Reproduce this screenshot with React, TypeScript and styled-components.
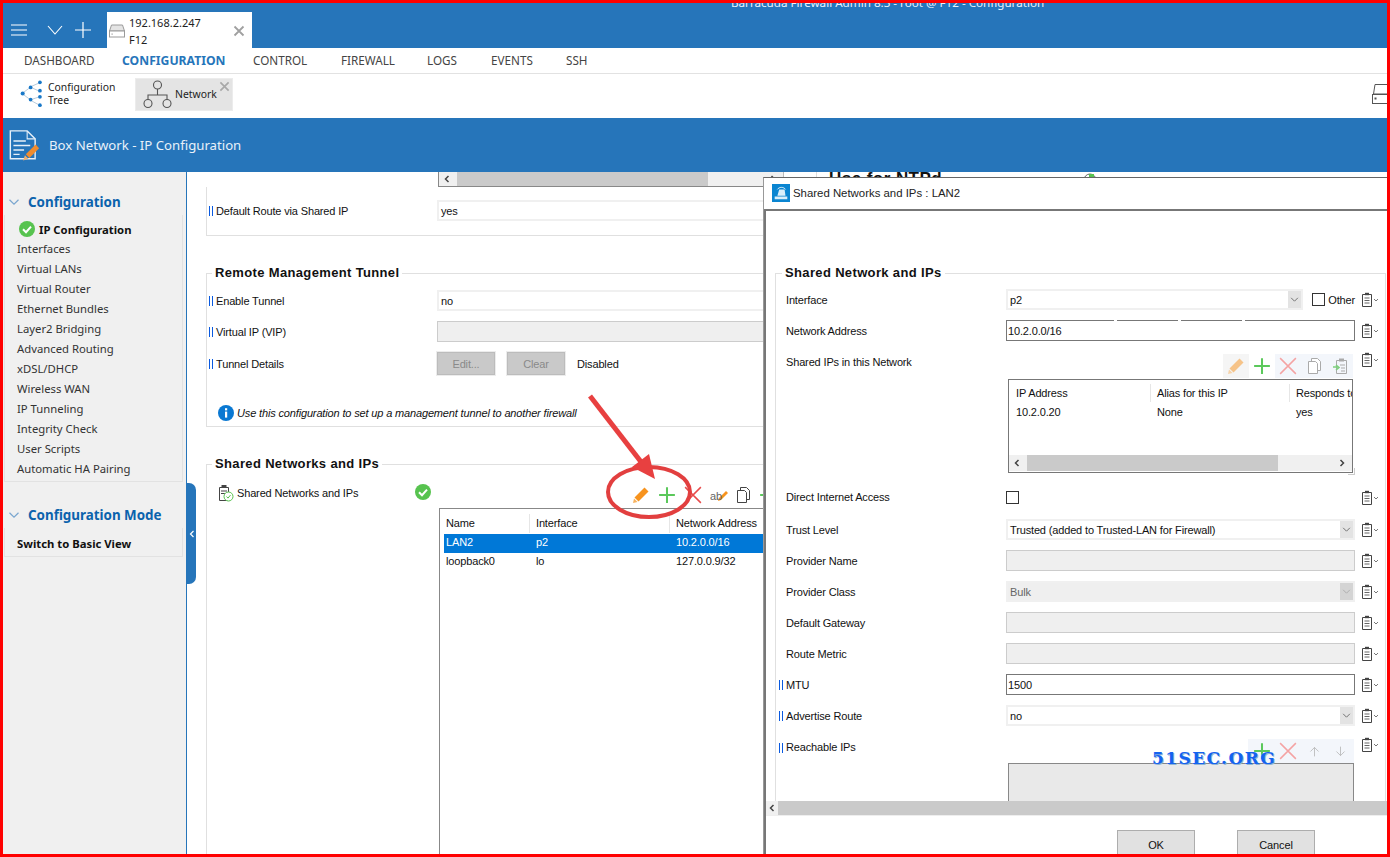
import React from "react";
import styled, { createGlobalStyle } from "styled-components";

const BLUE = "#2675ba";
const UI = `"Noto Sans", "Open Sans", sans-serif`;
const FORM = `"Liberation Sans", Arial, sans-serif`;

const Global = createGlobalStyle`
  html, body { margin: 0; padding: 0; background: #fff; }
  * { box-sizing: border-box; }
  svg { flex: none; }
`;

const Root = styled.div`
  position: relative;
  width: 1390px;
  height: 857px;
  border: 3px solid #f00;
  overflow: hidden;
  display: flex;
  flex-direction: column;
  background: #fff;
  font-family: ${FORM};
  font-size: 11px;
  letter-spacing: -0.15px;
  color: #111;
`;

/* top window bar */
const TopBar = styled.div`
  height: 45px;
  flex: none;
  background: ${BLUE};
  display: flex;
  align-items: flex-end;
  padding-left: 8px;
  letter-spacing: normal;
`;
const BarIcons = styled.div`
  display: flex;
  align-items: center;
  height: 36px;
  gap: 12px;
  width: 96px;
  & > svg:first-child { margin-right: 8px; }
`;
const HostTab = styled.div`
  width: 145px;
  height: 36px;
  background: #fff;
  display: flex;
  align-items: center;
  padding: 1px 7px 0 2px;
  font-family: ${UI};
  font-size: 11px;
  line-height: 17px;
  color: #222;
`;
const HostText = styled.div`
  margin-left: 4px;
  flex: 1;
`;
const WindowTitle = styled.div`
  align-self: flex-start;
  margin: -8px 0 0 479px;
  font-family: ${UI};
  font-size: 11.65px;
  line-height: 16px;
  color: #e8f1fa;
  white-space: nowrap;
`;

/* main nav */
const Nav = styled.div`
  height: 26px;
  flex: none;
  display: flex;
  align-items: center;
  padding-left: 21px;
  border-bottom: 1px solid #e2e2e2;
  font-family: ${UI};
  letter-spacing: normal;
`;
const NavItem = styled.div<{ $active?: boolean; $w: number }>`
  width: ${(p) => p.$w}px;
  margin-bottom: ${(p) => (p.$active ? 0 : 2)}px;
  font-size: ${(p) => (p.$active ? "12.2px" : "11.7px")};
  font-weight: ${(p) => (p.$active ? 700 : 400)};
  color: ${(p) => (p.$active ? BLUE : "#444")};
  white-space: nowrap;
`;

/* toolbar with module tabs */
const Tools = styled.div`
  height: 44px;
  flex: none;
  display: flex;
  align-items: center;
  padding: 0 0 4px 16px;
  font-family: ${UI};
  font-size: 10.4px;
  line-height: 13px;
  letter-spacing: normal;
  color: #222;
`;
const TreeButton = styled.div`
  display: flex;
  align-items: center;
  gap: 3px;
  width: 116px;
`;
const ModuleTab = styled.div`
  position: relative;
  width: 98px;
  height: 33px;
  display: flex;
  align-items: center;
  gap: 3px;
  padding-left: 7px;
  background: #e4e4e4;
  border: 1px solid #ececec;
`;
const ModuleClose = styled.div`
  position: absolute;
  top: 2px;
  right: 2px;
  display: flex;
`;
const EdgeIcon = styled.div`
  margin-left: auto;
  margin-right: -1px;
  display: flex;
  width: 16px;
  overflow: hidden;
`;

/* page header */
const PageHeader = styled.div`
  height: 54px;
  flex: none;
  background: ${BLUE};
  display: flex;
  align-items: center;
  gap: 9px;
  padding: 0 0 0 6px;
  font-family: ${UI};
  font-size: 13.2px;
  letter-spacing: normal;
  color: #e9f1f9;
`;

const Main = styled.div`
  flex: 1;
  min-height: 0;
  display: flex;
`;

/* left side bar */
const Sidebar = styled.div`
  width: 184px;
  flex: none;
  background: #f0f0f0;
  border-right: 1px solid ${BLUE};
  padding-top: 19px;
  font-family: ${UI};
  font-size: 11.3px;
  letter-spacing: normal;
`;
const SideHead = styled.div<{ $top?: number }>`
  display: flex;
  align-items: center;
  height: 22px;
  gap: 8px;
  padding-left: 5px;
  margin-top: ${(p) => p.$top ?? 0}px;
  font-size: 13.4px;
  font-weight: 700;
  color: #0b63ad;
`;
const SideGroup = styled.div`
  margin: 2px 3px 0 1px;
  padding: 5px 0 3px 12px;
  border-right: 1px solid #e2e2e2;
  border-bottom: 1px solid #e2e2e2;
  border-left: 1px solid #e2e2e2;
`;
const SideItem = styled.div<{ $bold?: boolean; $h?: number }>`
  height: ${(p) => p.$h ?? 20}px;
  display: flex;
  align-items: center;
  gap: 4px;
  font-weight: ${(p) => (p.$bold ? 700 : 400)};
  color: ${(p) => (p.$bold ? "#111" : "#333")};
  white-space: nowrap;
`;
const SideCheck = styled.span`
  display: flex;
  margin-left: 2px;
`;
const Collapse = styled.div`
  position: absolute;
  left: 184px;
  top: 480px;
  width: 9px;
  height: 101px;
  background: ${BLUE};
  border-radius: 0 7px 7px 0;
  display: flex;
  align-items: center;
  justify-content: center;
`;

/* configuration content behind the dialog */
const Content = styled.div`
  flex: 1;
  min-width: 0;
  overflow: hidden;
  display: flex;
  padding-left: 19px;
`;
const LeftColumn = styled.div`
  width: 578px;
  flex: none;
`;
const RightColumn = styled.div`
  margin-left: 32px;
  padding-left: 12px;
  width: 400px;
  height: 40px;
  flex: none;
  border-left: 1px solid #ddd;
  display: flex;
  gap: 140px;
`;
const NtpTitle = styled.div`
  margin-top: -3px;
  font-weight: 700;
  font-size: 17px;
  letter-spacing: 0.45px;
  line-height: 20px;
  white-space: nowrap;
`;
const OpenPanel = styled.div`
  height: 49px;
  padding: 8px 0 0 2px;
  border: 1px solid #e0e0e0;
  border-top: 0;
`;
const StubTable = styled.div`
  margin-left: 232px;
  height: 15px;
  overflow: hidden;
  border-bottom: 1px solid #888;
  border-left: 1px solid #888;
  border-right: 1px solid #bbb;
`;
const Group = styled.fieldset<{ $top: number; $h: number }>`
  margin: ${(p) => p.$top}px 0 0;
  padding: 0 0 0 2px;
  height: ${(p) => p.$h}px;
  min-width: 0;
  border: 1px solid #e0e0e0;
  & > legend {
    margin-left: 3px;
    padding: 0 3px;
    font-weight: 700;
    font-size: 13px;
    line-height: 18px;
    letter-spacing: 0.35px;
    color: #111;
  }
`;
const MainRow = styled.div<{ $h?: number; $top?: number }>`
  display: grid;
  grid-template-columns: 228px 1fr;
  align-items: center;
  height: ${(p) => p.$h ?? 31}px;
  margin-top: ${(p) => p.$top ?? 0}px;
`;
const Label = styled.div`
  display: flex;
  align-items: center;
  white-space: nowrap;
`;
const Marker = styled.span`
  width: 4px;
  height: 10px;
  margin-right: 3px;
  flex: none;
  border-left: 1px solid #0a5ae0;
  border-right: 1px solid #0a5ae0;
`;
const OutMarker = styled(Marker)`
  margin-left: -7px;
`;
const Select = styled.div<{ $off?: boolean }>`
  height: 21px;
  display: flex;
  align-items: center;
  justify-content: space-between;
  padding-left: 2px;
  background: ${(p) => (p.$off ? "#efefef" : "#fff")};
  border: 2px solid #f0f0f0;
  color: ${(p) => (p.$off ? "#666" : "#111")};
`;
const Caret = styled.div<{ $off?: boolean }>`
  width: 13px;
  height: 17px;
  background: ${(p) => (p.$off ? "#d4d4d4" : "#e3e3e3")};
  display: flex;
  align-items: center;
  justify-content: center;
`;
const Input = styled.div`
  position: relative;
  height: 21px;
  display: flex;
  align-items: center;
  padding-left: 1px;
  background: #fff;
  border: 1px solid #777;
`;
const IpInput = styled(Input)`
  &::before {
    content: "";
    position: absolute;
    left: 107px;
    top: -1px;
    width: 135px;
    height: 1px;
    background: repeating-linear-gradient(90deg, #fff 0 3px, transparent 3px 64px);
  }
`;
const OffInput = styled.div`
  height: 21px;
  background: #efefef;
  border: 1px solid #ccc;
`;
const GreyButton = styled.div`
  width: 58px;
  height: 23px;
  display: flex;
  align-items: center;
  justify-content: center;
  color: #8a8a8a;
  background: #c9c9c9;
  border: 1px solid #bcbcbc;
  outline: 1px solid #ececec;
`;
const ButtonRow = styled.div`
  display: flex;
  align-items: center;
  gap: 12px;
`;
const InfoLine = styled.div`
  display: flex;
  align-items: center;
  gap: 3px;
  margin: 25px 0 0 9px;
  font-style: italic;
  white-space: nowrap;
`;
const SharedHead = styled.div`
  display: flex;
  align-items: flex-start;
  height: 35px;
  padding: 11px 0 0 9px;
`;
const SharedLabel = styled.div`
  display: flex;
  align-items: center;
  gap: 3px;
  width: 197px;
  white-space: nowrap;
`;
const MainTools = styled.div`
  display: flex;
  align-items: center;
  gap: 8px;
  margin: 2px 0 0 201px;
`;
const Grid = styled.div`
  margin-left: 230px;
  height: 400px;
  border: 1px solid #888;
  border-right: 0;
  padding: 3px 0 0 4px;
`;
const GridHead = styled.div`
  display: grid;
  grid-template-columns: 85px 140px 1fr;
  height: 22px;
  align-items: center;
`;
const GridCell = styled.div`
  padding-left: 6px;
  white-space: nowrap;
  line-height: 19px;
  border-left: 1px solid #e6e6e6;
  &:first-child {
    border-left: 0;
    padding-left: 2px;
  }
`;
const GridRow = styled.div<{ $on?: boolean }>`
  display: grid;
  grid-template-columns: 90px 140px 1fr;
  height: 19px;
  align-items: center;
  padding: 0 0 3px 2px;
  background: ${(p) => (p.$on ? "#0078d7" : "transparent")};
  color: ${(p) => (p.$on ? "#fff" : "#111")};
`;

/* floating dialog */
const Dialog = styled.div`
  position: absolute;
  left: 760px;
  top: 174px;
  right: 0;
  bottom: 0;
  background: #fff;
  border-top: 1px solid #666;
  border-left: 1px solid #999;
  display: flex;
  flex-direction: column;
`;
const DialogTitle = styled.div`
  height: 31px;
  flex: none;
  display: flex;
  align-items: center;
  gap: 3px;
  padding: 0 0 2px 8px;
  font-size: 11.4px;
  letter-spacing: normal;
  color: #222;
`;
const DialogBody = styled.div`
  flex: 1;
  min-height: 0;
  display: flex;
  flex-direction: column;
  border-top: 2px solid #777;
  border-left: 2px solid #777;
`;
const DialogScroll = styled.div`
  flex: 1;
  min-height: 0;
  overflow: hidden;
  padding: 53px 1px 0 9px;
`;
const DialogGroup = styled.fieldset`
  margin: 0;
  padding: 2px 0 0 10px;
  min-width: 0;
  height: 620px;
  border: 1px solid #e0e0e0;
  & > legend {
    margin-left: -4px;
    padding: 0 3px;
    font-weight: 700;
    font-size: 13px;
    line-height: 18px;
    letter-spacing: 0.35px;
    color: #111;
  }
`;
const FormRow = styled.div<{ $h?: number; $top?: boolean }>`
  display: grid;
  grid-template-columns: 220px 349px 24px;
  align-items: ${(p) => (p.$top ? "start" : "center")};
  height: ${(p) => p.$h ?? 31}px;
  & > :first-child {
    line-height: ${(p) => (p.$top ? "33px" : "normal")};
  }
`;
const NoteCell = styled.div<{ $top?: boolean }>`
  display: flex;
  margin-left: 6px;
  margin-top: ${(p) => (p.$top ? "6px" : "0")};
`;
const InterfaceCell = styled.div`
  display: flex;
  align-items: center;
  justify-content: space-between;
`;
const ShortSelect = styled(Select)`
  width: 297px;
`;
const Other = styled.div`
  display: flex;
  align-items: center;
  gap: 3px;
`;
const Check = styled.div`
  width: 13px;
  height: 13px;
  background: #fff;
  border: 1px solid #333;
`;
const SharedBlock = styled.div`
  display: flex;
  flex-direction: column;
  padding: 8px 2px 0 0;
`;
const SlotStrip = styled.div`
  display: flex;
  align-items: center;
  gap: 8px;
  height: 24px;
  padding-left: 4px;
`;
const Slot = styled.div`
  width: 18px;
  display: flex;
  justify-content: center;
`;
const SharedTools = styled(SlotStrip)`
  margin: 0 0 1px 217px;
  background: linear-gradient(90deg, #f5f5f5 0 26px, #fff 26px 52px, #f3f6fb 52px);
`;
const DialogGrid = styled.div`
  position: relative;
  margin-left: 2px;
  height: 94px;
  border: 1px solid #777;
  display: flex;
  flex-direction: column;
`;
const DialogGridHead = styled.div`
  display: grid;
  grid-template-columns: 141px 139px 1fr;
  height: 26px;
  align-items: center;
  overflow: hidden;
  white-space: nowrap;
`;
const DialogCell = styled.div`
  padding-left: 6px;
  line-height: 18px;
  border-left: 1px solid #e6e6e6;
  &:first-child {
    border-left: 0;
    padding-left: 7px;
  }
`;
const DialogGridRow = styled.div`
  display: grid;
  grid-template-columns: 141px 139px 1fr;
  height: 11px;
  align-items: center;
  & > div { padding-left: 7px; }
`;
const Resize = styled.div`
  position: absolute;
  right: -3px;
  bottom: -3px;
  width: 7px;
  height: 7px;
  border-right: 1px solid #ccc;
  border-bottom: 1px solid #ccc;
`;
const HScroll = styled.div`
  height: 16px;
  flex: none;
  margin: auto 0 1px;
  background: #f0f0f0;
  display: flex;
  align-items: center;
  padding: 0 6px 0 4px;
`;
const StubScroll = styled(HScroll)`
  height: 14px;
  margin: 0;
`;
const Thumb = styled.div<{ $w: number }>`
  width: ${(p) => p.$w}px;
  height: 100%;
  background: #cacaca;
  margin: 0 auto 0 6px;
`;
const ReachBlock = styled.div`
  display: flex;
  flex-direction: column;
  padding: 8px 1px 0 0;
`;
const ReachTools = styled(SlotStrip)`
  margin-left: 242px;
  padding-left: 5px;
  background: #f3f6fb;
`;
const ReachBox = styled.div`
  margin-left: 2px;
  height: 40px;
  background: #e9e9e9;
  border: 1px solid #888;
`;
const DialogHScroll = styled.div`
  height: 15px;
  flex: none;
  background: #cacaca;
  border-bottom: 1px solid #eee;
  display: flex;
  align-items: center;
`;
const ScrollEnd = styled.div`
  width: 12px;
  height: 100%;
  background: #f0f0f0;
  display: flex;
  align-items: center;
  justify-content: center;
`;
const DialogFooter = styled.div`
  height: 38px;
  flex: none;
  display: flex;
  gap: 42px;
  padding: 14px 0 0 351px;
`;
const FooterButton = styled.div`
  width: 78px;
  height: 30px;
  flex: none;
  display: flex;
  align-items: center;
  justify-content: center;
  background: #e1e1e1;
  border: 1px solid #adadad;
`;
const Watermark = styled.div`
  position: absolute;
  left: 1149px;
  top: 744px;
  font-family: "DejaVu Serif", serif;
  font-weight: 700;
  font-size: 17px;
  line-height: 22px;
  letter-spacing: 1.4px;
  color: #1463f0;
  text-shadow: 1px 1px 0 #8fb3d6;
  white-space: nowrap;
`;
const Annotation = styled.svg`
  position: absolute;
  left: 0;
  top: 0;
  pointer-events: none;
`;

/* icons */
const Line = ({ d, c, w = 2, s = 16 }: { d: string; c: string; w?: number; s?: number }) => (
  <svg width={s} height={s} viewBox="0 0 16 16" fill="none" stroke={c} strokeWidth={w}>
    <path d={d} />
  </svg>
);
const Chevron = ({ c = "#555", s = 9 }: { c?: string; s?: number }) => (
  <Line d="M2 5l6 6 6-6" c={c} w={1.6} s={s} />
);
const ChevronLeft = () => <Line d="M11 2L5 8l6 6" c="#444" w={3} s={8} />;
const ChevronRight = () => <Line d="M5 2l6 6-6 6" c="#444" w={3} s={8} />;
const PlusIcon = ({ size = 18 }: { size?: number }) => <Line d="M8 1v14M1 8h14" c="#5bc85b" w={1.8} s={size} />;
const CrossIcon = ({ faded }: { faded?: boolean }) => (
  <Line d="M1 1l14 14M15 1L1 15" c={faded ? "#f4a3a3" : "#e84b4b"} w={1.3} s={18} />
);
const FadedSvg = styled.svg<{ $faded?: boolean }>`
  opacity: ${(p) => (p.$faded ? 0.5 : 1)};
`;
const PencilIcon = ({ faded }: { faded?: boolean }) => (
  <FadedSvg $faded={faded} width="18" height="18" viewBox="0 0 18 18">
    <path d="M12.5 1.5l4 4L6.5 15.5l-4-4z" fill="#f7931e" />
    <path d="M2 12.5l3.5 3.5L1 17z" fill="#f7b25e" />
  </FadedSvg>
);
const CopyIcon = ({ c = "#444" }: { c?: string }) => (
  <svg width="15" height="18" viewBox="0 0 15 18" fill="#fff" stroke={c}>
    <path d="M4.5 1.5h6l3 3v9h-9z" />
    <path d="M1.5 4.5h7l2 2v10h-9z" />
  </svg>
);
const PasteIcon = () => (
  <svg width="17" height="18" viewBox="0 0 17 18" fill="none">
    <path d="M4.5 3.5h10v13h-10z" stroke="#aaa" />
    <path d="M7 1.5h5v3H7z" fill="#aaa" />
    <path d="M8 8h5M9 11h4M9 14h4" stroke="#aaa" />
    <path d="M1 10h5M4 8l3 2.5L4 13" stroke="#7ed07e" strokeWidth="1.6" />
  </svg>
);
const RenameIcon = () => (
  <svg width="18" height="16" viewBox="0 0 18 16">
    <path d="M16 4l2 2-7 7-3 1 1-3z" fill="#f7931e" />
    <text x="0" y="13" fontFamily="Liberation Sans" fontSize="11" fill="#666">ab</text>
  </svg>
);
const NoteIcon = () => (
  <svg width="18" height="15" viewBox="0 0 18 15" fill="none">
    <path d="M1.5 2.5h9v12h-9z" stroke="#444" />
    <path d="M4 .8h4v2.4H4z" fill="#444" />
    <path d="M3.5 6h5M3.5 8.5h5M3.5 11h5" stroke="#555" strokeWidth=".9" />
    <path d="M13 7l2 2 2-2" stroke="#777" />
  </svg>
);
const GreenCheck = ({ s = 16 }: { s?: number }) => (
  <svg width={s} height={s} viewBox="0 0 16 16">
    <circle cx="8" cy="8" r="8" fill="#57c34f" />
    <path d="M4 8.2l3 3 5-5.6" fill="none" stroke="#fff" strokeWidth="2" />
  </svg>
);
const SyncMark = () => (
  <svg width="16" height="16" viewBox="0 0 16 16" fill="none">
    <path d="M2 8a6 6 0 0 1 12 0" stroke="#666" />
    <rect x="7" y="2" width="5" height="4" fill="#57c34f" />
  </svg>
);
const InfoIcon = () => (
  <svg width="16" height="16" viewBox="0 0 16 16">
    <circle cx="8" cy="8" r="8" fill="#0a78d2" />
    <rect x="7" y="6.6" width="2.2" height="6" fill="#fff" />
    <rect x="7" y="3.2" width="2.2" height="2.2" fill="#fff" />
  </svg>
);
const ServerIcon = ({ c = "#9a9a9a" }: { c?: string }) => (
  <svg width="16" height="14" viewBox="0 0 16 14">
    <path d="M2.5 1h11L15.5 7H.5z" fill="#e4e4e4" stroke={c} />
    <rect x=".5" y="7" width="15" height="6" fill="#fff" stroke={c} />
    <rect x="2.5" y="9.5" width="1.2" height="1.2" fill={c} />
  </svg>
);
const TreeIcon = () => (
  <svg width="26" height="28" viewBox="0 0 26 30" fill="#1878c8" stroke="none">
    <path d="M3 14L11 8M3 15l8 6M12 7l9-4M12 8l9 4M12 21l9-3M12 22l9 5" stroke="#9fb8cf" strokeWidth=".8" />
    <circle cx="3" cy="14.5" r="2.2" />
    <circle cx="11.5" cy="8" r="2" />
    <circle cx="11.5" cy="21" r="2" />
    <circle cx="21.5" cy="2.5" r="2" />
    <circle cx="21.5" cy="11.5" r="2" />
    <circle cx="21.5" cy="18" r="2" />
    <circle cx="21.5" cy="27" r="2" />
  </svg>
);
const NetworkIcon = () => (
  <svg width="29" height="29" viewBox="0 0 29 29" fill="none" stroke="#555" strokeWidth="1.1">
    <circle cx="14.5" cy="5" r="4" />
    <circle cx="5" cy="23.5" r="4" />
    <circle cx="24" cy="23.5" r="4" />
    <path d="M14.5 9v6M5 19.5V15h19v4.5" />
  </svg>
);
const DocIcon = () => (
  <svg width="31" height="33" viewBox="0 0 35 36" fill="none">
    <path d="M1.5 1.5h19l9 9V33h-28z" stroke="#e8f0f8" strokeWidth="1.6" />
    <path d="M20.5 1.5v9h9" stroke="#e8f0f8" strokeWidth="1.2" />
    <path d="M5 13h14M5 18h19M5 23h12M5 28h7" stroke="#e8f0f8" strokeWidth="1.6" />
    <path d="M30 17l4 4-11 11-4-4z" fill="#f08c2e" />
    <path d="M18 29l4 4-6 2z" fill="#f3b06e" />
  </svg>
);
const RouterIcon = () => (
  <svg width="18" height="18" viewBox="0 0 20 20">
    <rect width="20" height="20" fill="#0a85d1" />
    <path d="M3 14h14v3H3zM6 13l2-7h6l1 7z" fill="#d9eefa" />
    <path d="M6 6c2-3 7-3 9 0" fill="none" stroke="#fff" />
  </svg>
);
const ClipCheck = () => (
  <svg width="16" height="18" viewBox="0 0 16 18" fill="none">
    <path d="M1.5 3.5h9v13h-9z" stroke="#444" />
    <path d="M3.5 1h5v3h-5z" fill="#444" />
    <path d="M3 7h6M3 9.5h4" stroke="#444" />
    <circle cx="10.5" cy="12.5" r="4.5" fill="#fff" stroke="#57c34f" />
    <path d="M8.5 12.5l1.5 1.6 2.5-3" stroke="#57c34f" />
  </svg>
);

const navItems = [
  { t: "DASHBOARD", w: 98 },
  { t: "CONFIGURATION", w: 131, active: true },
  { t: "CONTROL", w: 88 },
  { t: "FIREWALL", w: 86 },
  { t: "LOGS", w: 64 },
  { t: "EVENTS", w: 75 },
  { t: "SSH", w: 40 },
];
const sideItems = [
  "Interfaces", "Virtual LANs", "Virtual Router", "Ethernet Bundles", "Layer2 Bridging", "Advanced Routing",
  "xDSL/DHCP", "Wireless WAN", "IP Tunneling", "Integrity Check", "User Scripts", "Automatic HA Pairing",
];

const Note = ({ top }: { top?: boolean }) => (
  <NoteCell $top={top}>
    <NoteIcon />
  </NoteCell>
);

const SelectBox = ({ value, off }: { value: string; off?: boolean }) => (
  <Select $off={off}>
    {value}
    <Caret $off={off}>
      <Chevron c={off ? "#aaa" : "#666"} />
    </Caret>
  </Select>
);

export default function App() {
  return (
    <Root>
      <Global />
      <TopBar>
        <BarIcons>
          <Line d="M0 3h16M0 8h16M0 13h16" c="#fff" w={1.1} />
          <Line d="M1 4l7 8 7-8" c="#fff" w={1.1} />
          <Line d="M8 0v16M0 8h16" c="#fff" w={1.2} />
        </BarIcons>
        <HostTab>
          <ServerIcon />
          <HostText>
            192.168.2.247
            <br />
            F12
          </HostText>
          <Line d="M2 2l12 12M14 2L2 14" c="#a0a0a0" w={2.4} s={12} />
        </HostTab>
        <WindowTitle>Barracuda Firewall Admin 8.3 - root @ F12 - Configuration</WindowTitle>
      </TopBar>
      <Nav>
        {navItems.map((n) => (
          <NavItem key={n.t} $active={n.active} $w={n.w}>
            {n.t}
          </NavItem>
        ))}
      </Nav>
      <Tools>
        <TreeButton>
          <TreeIcon />
          <div>
            Configuration
            <br />
            Tree
          </div>
        </TreeButton>
        <ModuleTab>
          <NetworkIcon />
          Network
          <ModuleClose>
            <Line d="M2 2l12 12M14 2L2 14" c="#a8a8a8" w={2.4} s={11} />
          </ModuleClose>
        </ModuleTab>
        <EdgeIcon>
          <svg width="24" height="20" viewBox="0 0 24 20" fill="#fff" stroke="#555">
            <path d="M3 .5h20L24 10H1.5z" />
            <rect x=".5" y="10.5" width="23" height="9" />
            <rect x="3" y="14" width="1" height="1" />
          </svg>
        </EdgeIcon>
      </Tools>
      <PageHeader>
        <DocIcon />
        Box Network - IP Configuration
      </PageHeader>
      <Main>
        <Sidebar>
          <SideHead>
            <Chevron c="#7aa6cf" s={12} />
            Configuration
          </SideHead>
          <SideGroup>
            <SideItem $bold $h={18}>
              <SideCheck>
                <GreenCheck />
              </SideCheck>
              IP Configuration
            </SideItem>
            {sideItems.map((s) => (
              <SideItem key={s}>{s}</SideItem>
            ))}
          </SideGroup>
          <SideHead $top={22}>
            <Chevron c="#7aa6cf" s={12} />
            Configuration Mode
          </SideHead>
          <SideGroup>
            <SideItem $bold>Switch to Basic View</SideItem>
          </SideGroup>
        </Sidebar>
        <Content>
          <LeftColumn>
            <StubTable>
              <StubScroll>
                <ChevronLeft />
                <Thumb $w={251} />
                <ChevronRight />
              </StubScroll>
            </StubTable>
            <OpenPanel>
              <MainRow>
                <Label>
                  <Marker />
                  Default Route via Shared IP
                </Label>
                <SelectBox value="yes" />
              </MainRow>
            </OpenPanel>
            <Group $top={28} $h={163}>
              <legend>Remote Management Tunnel</legend>
              <MainRow $top={3}>
                <Label>
                  <Marker />
                  Enable Tunnel
                </Label>
                <SelectBox value="no" />
              </MainRow>
              <MainRow>
                <Label>
                  <Marker />
                  Virtual IP (VIP)
                </Label>
                <OffInput />
              </MainRow>
              <MainRow $h={33}>
                <Label>
                  <Marker />
                  Tunnel Details
                </Label>
                <ButtonRow>
                  <GreyButton>Edit...</GreyButton>
                  <GreyButton>Clear</GreyButton>
                  Disabled
                </ButtonRow>
              </MainRow>
              <InfoLine>
                <InfoIcon />
                Use this configuration to set up a management tunnel to another firewall
              </InfoLine>
            </Group>
            <Group $top={28} $h={500}>
              <legend>Shared Networks and IPs</legend>
              <SharedHead>
                <SharedLabel>
                  <ClipCheck />
                  Shared Networks and IPs
                </SharedLabel>
                <GreenCheck />
                <MainTools>
                  <PencilIcon />
                  <PlusIcon />
                  <CrossIcon />
                  <RenameIcon />
                  <CopyIcon />
                  <PlusIcon />
                </MainTools>
              </SharedHead>
              <Grid>
                <GridHead>
                  <GridCell>Name</GridCell>
                  <GridCell>Interface</GridCell>
                  <GridCell>Network Address</GridCell>
                </GridHead>
                <GridRow $on>
                  <div>LAN2</div>
                  <div>p2</div>
                  <div>10.2.0.0/16</div>
                </GridRow>
                <GridRow>
                  <div>loopback0</div>
                  <div>lo</div>
                  <div>127.0.0.9/32</div>
                </GridRow>
              </Grid>
            </Group>
          </LeftColumn>
          <RightColumn>
            <NtpTitle>Use for NTPd</NtpTitle>
            <SyncMark />
          </RightColumn>
        </Content>
      </Main>
      <Collapse>
        <Line d="M11 2L5 8l6 6" c="#fff" w={2.4} s={8} />
      </Collapse>
      <Dialog>
        <DialogTitle>
          <RouterIcon />
          Shared Networks and IPs : LAN2
        </DialogTitle>
        <DialogBody>
          <DialogScroll>
            <DialogGroup>
              <legend>Shared Network and IPs</legend>
              <FormRow>
                <Label>Interface</Label>
                <InterfaceCell>
                  <ShortSelect>
                    p2
                    <Caret>
                      <Chevron c="#666" />
                    </Caret>
                  </ShortSelect>
                  <Other>
                    <Check />
                    Other
                  </Other>
                </InterfaceCell>
                <Note />
              </FormRow>
              <FormRow>
                <Label>Network Address</Label>
                <IpInput>10.2.0.0/16</IpInput>
                <Note />
              </FormRow>
              <FormRow $h={134} $top>
                <Label>Shared IPs in this Network</Label>
                <SharedBlock>
                  <SharedTools>
                    <Slot>
                      <PencilIcon faded />
                    </Slot>
                    <Slot>
                      <PlusIcon />
                    </Slot>
                    <Slot>
                      <CrossIcon faded />
                    </Slot>
                    <Slot>
                      <CopyIcon c="#aaa" />
                    </Slot>
                    <Slot>
                      <PasteIcon />
                    </Slot>
                  </SharedTools>
                  <DialogGrid>
                    <DialogGridHead>
                      <DialogCell>IP Address</DialogCell>
                      <DialogCell>Alias for this IP</DialogCell>
                      <DialogCell>Responds to</DialogCell>
                    </DialogGridHead>
                    <DialogGridRow>
                      <div>10.2.0.20</div>
                      <div>None</div>
                      <div>yes</div>
                    </DialogGridRow>
                    <HScroll>
                      <ChevronLeft />
                      <Thumb $w={251} />
                      <ChevronRight />
                    </HScroll>
                    <Resize />
                  </DialogGrid>
                </SharedBlock>
                <Note top />
              </FormRow>
              <FormRow $h={34}>
                <Label>Direct Internet Access</Label>
                <Check />
                <Note />
              </FormRow>
              <FormRow>
                <Label>Trust Level</Label>
                <SelectBox value="Trusted (added to Trusted-LAN for Firewall)" />
                <Note />
              </FormRow>
              <FormRow>
                <Label>Provider Name</Label>
                <OffInput />
                <Note />
              </FormRow>
              <FormRow>
                <Label>Provider Class</Label>
                <SelectBox value="Bulk" off />
                <Note />
              </FormRow>
              <FormRow>
                <Label>Default Gateway</Label>
                <OffInput />
                <Note />
              </FormRow>
              <FormRow>
                <Label>Route Metric</Label>
                <OffInput />
                <Note />
              </FormRow>
              <FormRow>
                <Label>
                  <OutMarker />
                  MTU
                </Label>
                <Input>1500</Input>
                <Note />
              </FormRow>
              <FormRow>
                <Label>
                  <OutMarker />
                  Advertise Route
                </Label>
                <SelectBox value="no" />
                <Note />
              </FormRow>
              <FormRow $h={80} $top>
                <Label>
                  <OutMarker />
                  Reachable IPs
                </Label>
                <ReachBlock>
                  <ReachTools>
                    <Slot>
                      <PlusIcon />
                    </Slot>
                    <Slot>
                      <CrossIcon faded />
                    </Slot>
                    <Slot>
                      <Line d="M8 14V3M3 8l5-5 5 5" c="#b5b5b5" w={1} s={13} />
                    </Slot>
                    <Slot>
                      <Line d="M8 2v11M3 8l5 5 5-5" c="#b5b5b5" w={1} s={13} />
                    </Slot>
                  </ReachTools>
                  <ReachBox />
                </ReachBlock>
                <Note top />
              </FormRow>
            </DialogGroup>
          </DialogScroll>
          <DialogHScroll>
            <ScrollEnd>
              <ChevronLeft />
            </ScrollEnd>
          </DialogHScroll>
          <DialogFooter>
            <FooterButton>OK</FooterButton>
            <FooterButton>Cancel</FooterButton>
          </DialogFooter>
        </DialogBody>
      </Dialog>
      <Watermark>51SEC.ORG</Watermark>
      <Annotation width="1384" height="851" viewBox="3 3 1384 851" fill="none">
        <ellipse cx="649" cy="492" rx="41" ry="25" stroke="#e23f3f" strokeWidth="4" />
        <path d="M590 396L645 467" stroke="#e84040" strokeWidth="5" />
        <path d="M655 479l-6-25-17 13z" fill="#e84040" />
      </Annotation>
    </Root>
  );
}
